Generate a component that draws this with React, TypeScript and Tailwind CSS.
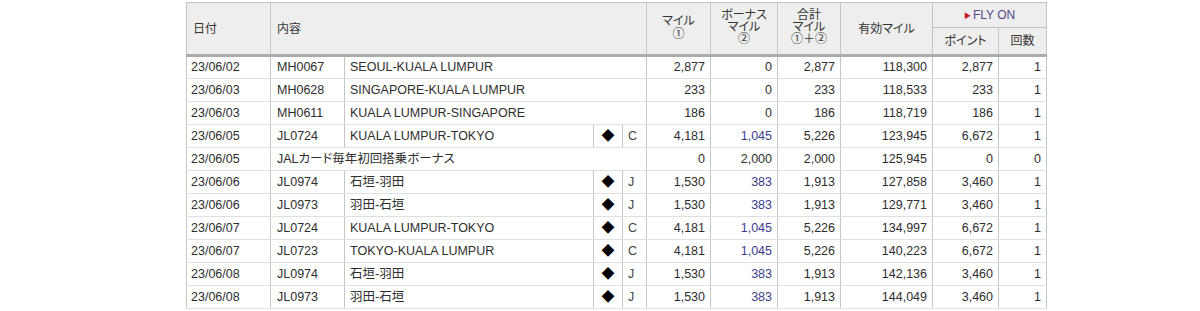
import React from "react";

type Row = {
  date: string;
  flight?: string;
  route?: string;
  special?: string;
  cls?: string;
  miles: string;
  bonus: string;
  bonusLink?: boolean;
  total: string;
  valid: string;
  points: string;
  count: string;
};

const rows: Row[] = [
  { date: "23/06/02", flight: "MH0067", route: "SEOUL-KUALA LUMPUR", miles: "2,877", bonus: "0", total: "2,877", valid: "118,300", points: "2,877", count: "1" },
  { date: "23/06/03", flight: "MH0628", route: "SINGAPORE-KUALA LUMPUR", miles: "233", bonus: "0", total: "233", valid: "118,533", points: "233", count: "1" },
  { date: "23/06/03", flight: "MH0611", route: "KUALA LUMPUR-SINGAPORE", miles: "186", bonus: "0", total: "186", valid: "118,719", points: "186", count: "1" },
  { date: "23/06/05", flight: "JL0724", route: "KUALA LUMPUR-TOKYO", cls: "C", miles: "4,181", bonus: "1,045", bonusLink: true, total: "5,226", valid: "123,945", points: "6,672", count: "1" },
  { date: "23/06/05", special: "JALカード毎年初回搭乗ボーナス", miles: "0", bonus: "2,000", total: "2,000", valid: "125,945", points: "0", count: "0" },
  { date: "23/06/06", flight: "JL0974", route: "石垣-羽田", cls: "J", miles: "1,530", bonus: "383", bonusLink: true, total: "1,913", valid: "127,858", points: "3,460", count: "1" },
  { date: "23/06/06", flight: "JL0973", route: "羽田-石垣", cls: "J", miles: "1,530", bonus: "383", bonusLink: true, total: "1,913", valid: "129,771", points: "3,460", count: "1" },
  { date: "23/06/07", flight: "JL0724", route: "KUALA LUMPUR-TOKYO", cls: "C", miles: "4,181", bonus: "1,045", bonusLink: true, total: "5,226", valid: "134,997", points: "6,672", count: "1" },
  { date: "23/06/07", flight: "JL0723", route: "TOKYO-KUALA LUMPUR", cls: "C", miles: "4,181", bonus: "1,045", bonusLink: true, total: "5,226", valid: "140,223", points: "6,672", count: "1" },
  { date: "23/06/08", flight: "JL0974", route: "石垣-羽田", cls: "J", miles: "1,530", bonus: "383", bonusLink: true, total: "1,913", valid: "142,136", points: "3,460", count: "1" },
  { date: "23/06/08", flight: "JL0973", route: "羽田-石垣", cls: "J", miles: "1,530", bonus: "383", bonusLink: true, total: "1,913", valid: "144,049", points: "3,460", count: "1" },
];

const th = "bg-[#eeeeee] border border-[#c4c4c4] font-normal text-[#333] p-0";
const thick = "border-b-[3px] border-b-[#ababab]";
const td = "h-[23px] p-0 border-x border-x-[#c6c6c6] border-b border-b-[#e0e0e0] whitespace-nowrap";
const num = `${td} text-right pr-[5px]`;
const circ = "text-[12px] leading-[12px] text-[#333]";

export default function App() {
  return (
    <div
      className="w-[1200px] h-[311px] overflow-hidden bg-white pt-[2px] pl-[186px] text-[12.5px] text-[#2e2e2e] [font-feature-settings:'palt']"
      style={{ fontFamily: '"Liberation Sans", "Noto Sans CJK JP", sans-serif' }}
    >
      <table className="table-fixed border-collapse w-[861px]">
        <colgroup>
          <col className="w-[84px]" />
          <col className="w-[74px]" />
          <col className="w-[249px]" />
          <col className="w-[29px]" />
          <col className="w-[24px]" />
          <col className="w-[64px]" />
          <col className="w-[67px]" />
          <col className="w-[63px]" />
          <col className="w-[92px]" />
          <col className="w-[66px]" />
          <col className="w-[48px]" />
        </colgroup>
        <thead className="text-[12px]">
          <tr className="h-[25px]">
            <th rowSpan={2} className={`${th} ${thick} text-left pl-[6px]`}>日付</th>
            <th rowSpan={2} colSpan={4} className={`${th} ${thick} text-left pl-[6px]`}>内容</th>
            <th rowSpan={2} className={`${th} ${thick} text-center leading-[13px] pb-[3px]`}>
              <div>マイル</div>
              <div className={circ}>①</div>
            </th>
            <th rowSpan={2} className={`${th} ${thick} text-center leading-[12px] pb-[3px]`}>
              <div>ボーナス</div>
              <div>マイル</div>
              <div className={circ}>②</div>
            </th>
            <th rowSpan={2} className={`${th} ${thick} text-center leading-[12px] pb-[3px]`}>
              <div>合計</div>
              <div>マイル</div>
              <div className={circ}>①＋②</div>
            </th>
            <th rowSpan={2} className={`${th} ${thick} text-center`}>有効マイル</th>
            <th colSpan={2} className={`${th} text-center text-[#53478c]`}>
              <span className="text-[#d0101a] text-[7px] align-[1px] mr-[2px]">▶</span>
              FLY ON
            </th>
          </tr>
          <tr className="h-[28px]">
            <th className={`${th} ${thick} text-center`}>ポイント</th>
            <th className={`${th} ${thick} text-center`}>回数</th>
          </tr>
        </thead>
        <tbody>
          {rows.map((r, i) => (
            <tr key={i}>
              <td className={`${td} pl-[4px]`}>{r.date}</td>
              {r.special ? (
                <td colSpan={4} className={`${td} pl-[6px]`}>{r.special}</td>
              ) : (
                <>
                  <td className={`${td} pl-[6px]`}>{r.flight}</td>
                  <td colSpan={r.cls ? 1 : 3} className={`${td} pl-[5px]`}>{r.route}</td>
                  {r.cls && (
                    <>
                      <td className={`${td} text-center text-black text-[13px]`}>◆</td>
                      <td className={`${td} pl-[5px] text-[#444]`}>{r.cls}</td>
                    </>
                  )}
                </>
              )}
              <td className={num}>{r.miles}</td>
              <td className={`${num} ${r.bonusLink ? "text-[#3d3d8f]" : ""}`}>{r.bonus}</td>
              <td className={num}>{r.total}</td>
              <td className={num}>{r.valid}</td>
              <td className={num}>{r.points}</td>
              <td className={num}>{r.count}</td>
            </tr>
          ))}
        </tbody>
      </table>
    </div>
  );
}
